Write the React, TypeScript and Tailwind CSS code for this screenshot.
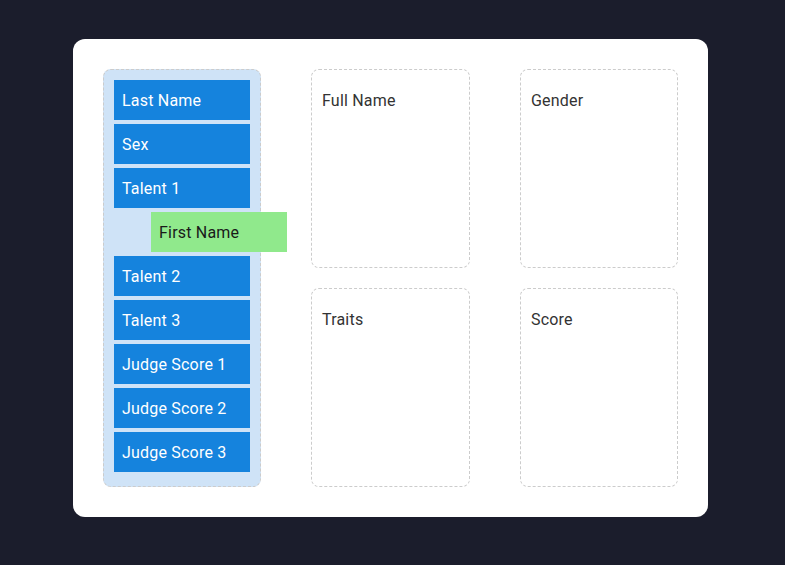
import React from "react";

const items = ["Last Name", "Sex", "Talent 1", "First Name", "Talent 2", "Talent 3", "Judge Score 1", "Judge Score 2", "Judge Score 3"];

function Box({ label }: { label: string }) {
  return (
    <div className="h-[199px] rounded-lg border border-dashed border-[#cccccc] bg-white px-[10px] pt-[19px] text-base leading-6 tracking-[0.2px] text-[#333333]">
      {label}
    </div>
  );
}

export default function App() {
  return (
    <div className="min-h-[565px] w-full bg-[#1b1d2c] pl-[73px] pt-[39px]" style={{ fontFamily: "Roboto, 'Noto Sans', sans-serif" }}>
      <div className="w-[635px] rounded-xl bg-white p-[30px]">
        <div className="grid grid-cols-[158px_159px_158px] gap-x-[50px]">
          <div className="h-[418px] rounded-lg border border-dashed border-[#cccccc] bg-[#cfe3f7] p-[10px]">
            {items.map((it) =>
              it === "First Name" ? (
                <div key={it} className="mb-1 ml-[37px] flex h-10 w-[136px] items-center bg-[#90e98c] px-2 pt-[2px] text-base tracking-[0.2px] text-[#1a1a1a]">
                  {it}
                </div>
              ) : (
                <div key={it} className="mb-1 flex h-10 w-[136px] items-center bg-[#1583dd] px-2 pt-[2px] text-base tracking-[0.2px] text-white">
                  {it}
                </div>
              )
            )}
          </div>
          <div className="flex flex-col gap-[20px]">
            <Box label="Full Name" />
            <Box label="Traits" />
          </div>
          <div className="flex flex-col gap-[20px]">
            <Box label="Gender" />
            <Box label="Score" />
          </div>
        </div>
      </div>
    </div>
  );
}
